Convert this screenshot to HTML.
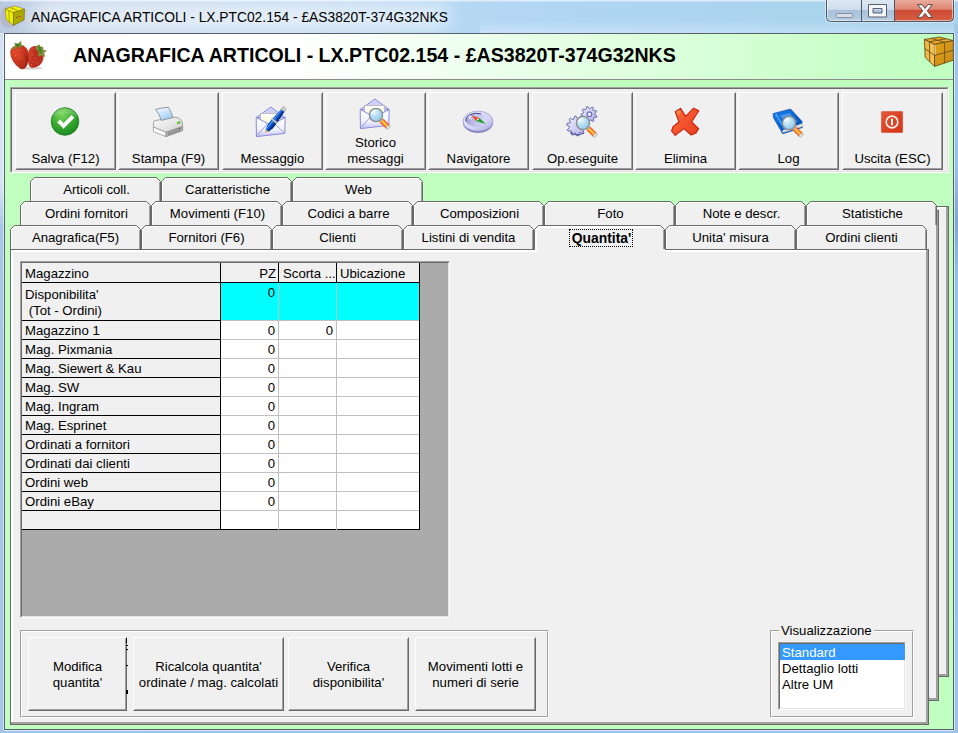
<!DOCTYPE html><html lang="it"><head><meta charset="utf-8"><title>ANAGRAFICA ARTICOLI</title><style>
html,body{margin:0;padding:0}
body{width:958px;height:733px;overflow:hidden;position:relative;font-family:"Liberation Sans",Arial,sans-serif;font-size:13.2px;color:#000;background:#b9d1ea}
.abs{position:absolute}
#frame{position:absolute;left:0;top:0;width:958px;height:733px;background:linear-gradient(90deg,#b9c8de 0,#c9d9ec 6%,#c6dcf2 30%,#b4d7f4 50%,#aed5f2 65%,#aad3ee 85%,#a6d0ec 100%)}
#title{position:absolute;left:31px;top:9px;font-size:13.8px;line-height:18px;color:#000;white-space:nowrap;letter-spacing:0}
#client{position:absolute;left:4px;top:33px;width:948px;height:695px;border:1px solid #56606c;background:#C0FFC0}
#hdr{position:absolute;left:5px;top:34px;width:948px;height:45px;background:linear-gradient(90deg,#fff 0,#fff 30%,#C0FFC0 100%);border-bottom:1px solid #8a8a8a}
#hdrtxt{position:absolute;left:73px;top:43px;font-size:19.6px;font-weight:bold;line-height:24px;white-space:nowrap}
.sunk{position:absolute;box-sizing:border-box;background:#F0F0F0;border:1px solid;border-color:#A0A0A0 #fff #fff #A0A0A0}
.sunk:before{content:"";position:absolute;left:0;top:0;right:0;bottom:0;border:1px solid;border-color:#696969 #E3E3E3 #E3E3E3 #696969}
.btn{position:absolute;box-sizing:border-box;background:#F0F0F0;border:1px solid;border-color:#fff #696969 #696969 #fff;text-align:center;line-height:16px}
.btn:before{content:"";position:absolute;left:0;top:0;right:0;bottom:0;border:1px solid;border-color:#F0F0F0 #A0A0A0 #A0A0A0 #F0F0F0}
.btn span{position:absolute;left:0;right:0;display:block}
.tabl{position:absolute;width:131px;height:24px;line-height:24px;text-align:center;white-space:nowrap}
.cell{position:absolute;box-sizing:border-box;white-space:nowrap;overflow:hidden;line-height:17px}
</style></head><body>
<div id="frame"></div>
<div class="abs" style="left:0;top:0;width:958px;height:33px;overflow:hidden"><div class="abs" style="left:30px;top:6px;width:420px;height:22px;border-radius:11px;background:rgba(255,255,255,.62);filter:blur(9px)"></div><div class="abs" style="left:0;top:0;width:958px;height:2px;background:linear-gradient(180deg,rgba(255,255,255,.7),rgba(255,255,255,.15))"></div><div class="abs" style="left:480px;top:20px;width:478px;height:13px;background:linear-gradient(180deg,rgba(255,255,255,0),rgba(255,255,255,.28))"></div></div>
<div class="abs" style="left:0;top:33px;width:4px;height:700px;background:linear-gradient(180deg,#d3e3f4 0,#d3e3f4 22%,#a7c6e8 28%,#a4c4e8 100%)"></div><div class="abs" style="left:3px;top:33px;width:1px;height:697px;background:rgba(255,255,255,.55)"></div>
<div class="abs" style="left:954px;top:23px;width:4px;height:710px;background:linear-gradient(180deg,#a4cae8 0,#9cc0e4 20%,#84a6cc 28%,#9cc0e4 36%,#9cc2e6 100%)"></div><div class="abs" style="left:954px;top:33px;width:1px;height:697px;background:rgba(255,255,255,.6)"></div>
<div class="abs" style="left:0;top:730px;width:958px;height:3px;background:linear-gradient(90deg,#a4c4e8,#9cc2e6)"></div><div class="abs" style="left:4px;top:730px;width:950px;height:1px;background:rgba(255,255,255,.6)"></div>
<svg class="abs" style="left:0px;top:0px;overflow:visible" width="32" height="32" viewBox="0 0 32 32" ><ellipse cx="9" cy="17" rx="9" ry="11" fill="#a07070" opacity=".18"/><path d="M5.2,9 L15,6 L24.6,9.2 L13.4,12.6 Z" fill="#f4f418" stroke="#7a6a10" stroke-width=".5"/><path d="M5.2,9 L13.4,12.6 L13.4,25.4 L6.2,19.6 Z" fill="#f2f200" stroke="#7a6a10" stroke-width=".5"/><path d="M13.4,12.6 L24.6,9.2 L24.2,20 L13.4,25.4 Z" fill="#a8a800" stroke="#6a5a10" stroke-width=".5"/><path d="M8.8,10.6 L9.4,22.2 M10.2,7.6 L19,11" stroke="#b4b000" stroke-width="1.2" fill="none"/><circle cx="16.6" cy="17.4" r=".6" fill="#d01010"/><circle cx="18.6" cy="16.6" r=".5" fill="#d01010"/><circle cx="20.6" cy="16.4" r=".5" fill="#d01010"/></svg>
<div id="title">ANAGRAFICA ARTICOLI - LX.PTC02.154 - £AS3820T-374G32NKS</div>
<svg class="abs" style="left:820px;top:0px;overflow:visible" width="138" height="28" viewBox="0 0 138 28" ><defs><linearGradient id="wcA" x1="0" y1="0" x2="0" y2="1"><stop offset="0" stop-color="#dfe9f4"/><stop offset=".48" stop-color="#cddcec"/><stop offset=".5" stop-color="#a9c2da"/><stop offset="1" stop-color="#b6cde2"/></linearGradient><linearGradient id="wcB" x1="0" y1="0" x2="0" y2="1"><stop offset="0" stop-color="#eab0a2"/><stop offset=".46" stop-color="#de8470"/><stop offset=".5" stop-color="#cf4a34"/><stop offset="1" stop-color="#d66044"/></linearGradient></defs><path d="M6.5,-1 V17.5 Q6.5,21.5 10.5,21.5 H74.5 V-1 Z" fill="url(#wcA)"/><path d="M74.5,-1 V21.5 H129.5 Q133.5,21.5 133.5,17.5 V-1 Z" fill="url(#wcB)"/><path d="M7.5,0 V17.5 Q7.5,20.5 10.5,20.5 H73.5 M75.5,20.5 H129.5 Q132.5,20.5 132.5,17.5 V0" fill="none" stroke="#fff" stroke-opacity=".5"/><path d="M6.5,-1 V17.5 Q6.5,21.5 10.5,21.5 H129.5 Q133.5,21.5 133.5,17.5 V-1 M41.5,0 V21 M74.5,0 V21" fill="none" stroke="#4c5966" stroke-width="1"/><path d="M5.5,-1 V18 Q5.5,22.5 10.5,22.5 H129.5 Q134.5,22.5 134.5,18 V-1" fill="none" stroke="#fff" stroke-opacity=".45"/><rect x="16.5" y="13.5" width="16" height="4" rx=".8" fill="#d9dfe8" stroke="#7f8fa2" stroke-width="1"/><path d="M48.5,4.5 H66.5 V17 H48.5 Z M53,8.5 V13 H62 V8.5 Z" fill="#f4f6f9" fill-rule="evenodd" stroke="#56606e" stroke-width="1" stroke-linejoin="round"/><path d="M97.6,4.6 H102.2 L105,8.4 L107.8,4.6 H112.4 L107.3,10.9 L112.6,17.4 H108 L105,13.4 L102,17.4 H97.4 L102.7,10.9 Z" fill="#f6f6f6" stroke="#5a4640" stroke-width="1" stroke-linejoin="round"/></svg>
<div id="client"></div>
<div id="hdr"></div>
<svg class="abs" style="left:5px;top:34px;overflow:visible" width="60" height="44" viewBox="0 0 60 44" ><defs><radialGradient id="sb1" cx=".3" cy=".3" r=".8"><stop offset="0" stop-color="#e2482a"/><stop offset=".6" stop-color="#c4341f"/><stop offset="1" stop-color="#a82a1a"/></radialGradient></defs><ellipse cx="26" cy="34.2" rx="12" ry="1.4" fill="#b0b0b0" opacity=".55"/><path d="M23.5,17 C25,12.5 31,10.5 35,13.5 C39,16 39.5,23 37.5,27.5 C35.5,32 30,34.5 26,33.5 C22.5,32.5 22.5,23 23.5,17 Z" fill="#b93220"/><path d="M24,18 C25,14.5 28,13 30,14 C27.5,18 26,23 25.5,30 C23.8,27 23.2,22 24,18 Z" fill="#cf3e24"/><path d="M31,12 L34.5,10.5 L36,13 L38,12.5 L38.5,16 L42,16.5 L39,19 L40.5,23 L37,21.5 L33,22 L33.5,17.5 L30.5,15 Z" fill="#8a8a3c"/><path d="M33,11.5 L36,13.5 L37,18 L35,20 L33.5,16 Z" fill="#3e8a2a"/><path d="M5.3,19 C5,14 9,11 13,11.5 C17,10.5 21.5,12.5 22.8,16.5 C24,21 24,27 21.5,32 C20.5,35 17,36.2 15,34.5 C10,31 5.8,25.5 5.3,19 Z" fill="url(#sb1)"/><path d="M19.5,20 L23,24 L22.5,31 L20.5,33 L21,26 Z" fill="#8f2416" opacity=".8"/><path d="M6.5,14.5 L10,11.5 L9.5,8.5 L12.5,10 L16.2,6.8 L16.5,11 L19.5,11.5 L15,13.5 L12,13 L9,15.5 Z" fill="#7c8a34"/><path d="M10.5,10 L13,9.5 L14.5,12 L12,12.5 Z" fill="#2f6f2a"/><g fill="#e8684a"><rect x="8" y="17" width="1" height="1.2"/><rect x="11" y="16.2" width="1" height="1.2"/><rect x="14" y="15.4" width="1" height="1.2"/><rect x="10" y="21" width="1" height="1.2"/><rect x="13.5" y="20" width="1" height="1.2"/><rect x="12.5" y="24.5" width="1" height="1.2"/><rect x="16" y="23" width="1" height="1.2"/><rect x="27" y="20" width="1" height="1.2"/><rect x="29.5" y="24" width="1" height="1.2"/><rect x="27.5" y="27" width="1" height="1.2"/><rect x="31" y="28.5" width="1" height="1.2"/><rect x="26" y="30" width="1" height="1.2"/></g></svg>
<div id="hdrtxt">ANAGRAFICA ARTICOLI - LX.PTC02.154 - £AS3820T-374G32NKS</div>
<div class="abs" style="left:920px;top:34px;width:33px;height:40px;overflow:hidden"><svg class="abs" style="left:0px;top:0px;overflow:visible" width="40" height="40" viewBox="0 0 40 40" ><defs><linearGradient id="bxL" x1="0" y1="0" x2="1" y2="0"><stop offset="0" stop-color="#eeb03a"/><stop offset="1" stop-color="#f8c860"/></linearGradient><linearGradient id="bxR" x1="0" y1="0" x2="1" y2="1"><stop offset="0" stop-color="#e2a21e"/><stop offset="1" stop-color="#c88a10"/></linearGradient></defs><path d="M4.4,5.4 L19.6,3 L33.4,6.6 L14.4,10.4 Z" fill="#eaa82c" stroke="#5e4410" stroke-width=".8" stroke-linejoin="round"/><path d="M4.4,5.4 L14.4,10.4 L14.6,32.4 L5.2,23.6 Z" fill="url(#bxL)" stroke="#5e4410" stroke-width=".8" stroke-linejoin="round"/><path d="M14.4,10.4 L33.4,6.6 L33.4,26.2 L14.6,32.4 Z" fill="url(#bxR)" stroke="#5e4410" stroke-width=".8" stroke-linejoin="round"/><path d="M9.4,7.9 L9.8,28 M4.8,14.4 L14.5,21.4 L33.4,16.2 M24.6,8.4 L24.6,29.2 M9.4,7.9 L26,4.7 M11.5,4.3 L24.6,8.4" fill="none" stroke="#6a5018" stroke-width=".9"/><path d="M14.9,11 L15,20.6" stroke="#fff0c0" stroke-width="1" opacity=".9"/></svg></div>
<div class="sunk" style="left:10px;top:87px;width:939px;height:86px"></div>
<div class="btn" style="left:15px;top:92px;width:101px;height:78px"><span style="top:58px">Salva (F12)</span></div>
<svg class="abs" style="left:45px;top:102px;overflow:visible" width="40" height="40" viewBox="0 0 40 40" ><defs><radialGradient id="ck" cx=".4" cy=".25" r=".85"><stop offset="0" stop-color="#7fd65e"/><stop offset=".45" stop-color="#3cae32"/><stop offset="1" stop-color="#14801c"/></radialGradient></defs><circle cx="20" cy="19.5" r="13.8" fill="url(#ck)" stroke="#1c7a20" stroke-width=".8"/><path d="M8,14 A13,13 0 0 1 32,14 A20,14 0 0 0 8,14 Z" fill="#fff" opacity=".18"/><path d="M12.4,20.4 L15,17.8 L18.6,21.2 L26.6,13.2 L29.2,15.8 L18.6,26.4 Z" fill="#fff" stroke="#e8e8e8" stroke-width=".6" stroke-linejoin="round"/><path d="M13,21 L18.6,26.4 L29,16" fill="none" stroke="#c8c8c8" stroke-width="1" opacity=".7"/></svg>
<div class="btn" style="left:118px;top:92px;width:101px;height:78px"><span style="top:58px">Stampa (F9)</span></div>
<svg class="abs" style="left:148px;top:102px;overflow:visible" width="40" height="40" viewBox="0 0 40 40" ><defs><linearGradient id="prT" x1="0" y1="0" x2="1" y2="1"><stop offset="0" stop-color="#f8f8f8"/><stop offset=".6" stop-color="#e4e4e4"/><stop offset="1" stop-color="#bcbcbc"/></linearGradient><linearGradient id="prP" x1="0" y1="0" x2=".6" y2="1"><stop offset="0" stop-color="#ffffff"/><stop offset="1" stop-color="#9cccf8"/></linearGradient></defs><path d="M5.4,20.4 Q5.4,19 7,18.6 L26,15.2 Q29,15 31.5,16.6 Q34.6,19 34.6,22 L34.6,24.6 L18,30.4 L5.4,25 Z" fill="url(#prT)" stroke="#9a9a9a" stroke-width=".9" stroke-linejoin="round"/><path d="M5.4,25 L18,30.4 L18,34.6 L5.4,29.6 Z" fill="#ffffff" stroke="#a2a2a2" stroke-width=".9" stroke-linejoin="round"/><path d="M18,30.4 L34.6,24.6 L34.6,28.6 L18,34.6 Z" fill="#b2b2b2" stroke="#8e8e8e" stroke-width=".9" stroke-linejoin="round"/><path d="M20,31.2 L33,26.6 M20,32.8 L33,28.2" stroke="#7e7e7e" stroke-width=".8"/><path d="M7.6,7.4 Q14,5.6 20.4,5.2 Q23.6,10 24.8,15.6 L13.2,18.4 Q11.6,12 7.6,7.4 Z" fill="url(#prP)" stroke="#8e8e8e" stroke-width=".9" stroke-linejoin="round"/><ellipse cx="30.6" cy="20.6" rx="2" ry="1.2" transform="rotate(-25 30.6 20.6)" fill="#58c428"/><circle cx="31.4" cy="26.4" r=".7" fill="#3a5a7a"/></svg>
<div class="btn" style="left:222px;top:92px;width:101px;height:78px"><span style="top:58px">Messaggio</span></div>
<svg class="abs" style="left:251px;top:102px;overflow:visible" width="40" height="40" viewBox="0 0 40 40" ><defs>
<radialGradient id="gLens" cx=".35" cy=".3" r=".8"><stop offset="0" stop-color="#eaf7fd"/><stop offset=".45" stop-color="#b4ddf2"/><stop offset="1" stop-color="#8cc4e6"/></radialGradient>
<linearGradient id="gHandle" x1="0" y1="0" x2="1" y2="0"><stop offset="0" stop-color="#f4501c"/><stop offset=".3" stop-color="#ff8a30"/><stop offset=".5" stop-color="#ffd84a"/><stop offset=".75" stop-color="#ff8a30"/><stop offset="1" stop-color="#f04818"/></linearGradient>
<linearGradient id="gEnv" x1="0" y1="0" x2="0" y2="1"><stop offset="0" stop-color="#ffffff"/><stop offset=".6" stop-color="#f2f2ff"/><stop offset="1" stop-color="#c4c4f4"/></linearGradient>
<linearGradient id="gLetter" x1="0" y1="0" x2="0" y2="1"><stop offset="0" stop-color="#ffffff"/><stop offset="1" stop-color="#fdf6c8"/></linearGradient>
</defs><path d="M5.2,15.5 L19.8,5 L34.2,15.5 Z" fill="#cfcffa" stroke="#8e8ee0" stroke-width="1"/><rect x="9.5" y="11.5" width="19.8" height="12" fill="url(#gLetter)" stroke="#b4b4b4" stroke-width=".8"/><path d="M5.2,15.6 L19.6,23 L34.2,15.6 L33.8,31.4 L5.4,34.6 Z" fill="url(#gEnv)" stroke="#8a8adc" stroke-width="1" stroke-linejoin="round"/><path d="M5.6,34.2 L16.5,21.6 M33.6,31.2 L23.2,21.4" fill="none" stroke="#9a9ae0" stroke-width=".9"/><g transform="translate(14.2,30.8) rotate(-52)"><path d="M0,0 L3,-1.6 L3,1.6 Z" fill="#d8b040"/><path d="M3,-1.8 L8,-3.1 L14,-3.1 L14,3.1 L8,3.1 L3,1.8 Z" fill="#0e5ed0"/><path d="M3,.5 L14,.9 L14,3.1 L8,3.1 L3,1.8 Z" fill="#082e86"/><rect x="14" y="-3.2" width="2.2" height="6.4" fill="#c8c8c8" stroke="#777" stroke-width=".4"/><path d="M16.2,-3 L28.4,-2.1 L28.4,2.1 L16.2,3 Z" fill="#0e5ed0"/><path d="M16.2,.9 L28.4,.6 L28.4,2.1 L16.2,3 Z" fill="#082e86"/><path d="M4,-1.3 L27.6,-1.5" stroke="#5aa0f4" stroke-width=".9"/><rect x="28.4" y="-2.1" width="3.6" height="4.2" rx=".9" fill="#d0d0d0" stroke="#777" stroke-width=".4"/></g></svg>
<div class="btn" style="left:325px;top:92px;width:101px;height:78px"><span style="top:42px">Storico</span><span style="top:58px">messaggi</span></div>
<svg class="abs" style="left:355px;top:94px;overflow:visible" width="40" height="40" viewBox="0 0 40 40" ><path d="M5.2,15.5 L19.8,5 L34.2,15.5 Z" fill="#cfcffa" stroke="#8e8ee0" stroke-width="1"/><rect x="9.5" y="11.5" width="19.8" height="12" fill="url(#gLetter)" stroke="#b4b4b4" stroke-width=".8"/><path d="M5.2,15.6 L19.6,23 L34.2,15.6 L33.8,31.4 L5.4,34.6 Z" fill="url(#gEnv)" stroke="#8a8adc" stroke-width="1" stroke-linejoin="round"/><path d="M5.6,34.2 L16.5,21.6 M33.6,31.2 L23.2,21.4" fill="none" stroke="#9a9ae0" stroke-width=".9"/><g><g transform="translate(26.3,26.3) rotate(-45)"><rect x="-2.6" y="0" width="5.2" height="9" fill="url(#gHandle)"/><rect x="-2.4" y="8.6" width="4.8" height="2.2" rx="1" fill="#e8e8e8" stroke="#909090" stroke-width=".6"/><rect x="-1.2" y="-2.2" width="2.4" height="2.6" fill="#d8d8d8" stroke="#8a8a8a" stroke-width=".5"/></g><circle cx="21" cy="21" r="6.6" fill="url(#gLens)" stroke="#8a8a8a" stroke-width="1.3"/><path d="M16.8,19.5 A4.6,4.6 0 0 1 20,16.4" fill="none" stroke="#fff" stroke-width="1.2" stroke-linecap="round" opacity=".9"/></g></svg>
<div class="btn" style="left:428px;top:92px;width:101px;height:78px"><span style="top:58px">Navigatore</span></div>
<svg class="abs" style="left:457px;top:102px;overflow:visible" width="40" height="40" viewBox="0 0 40 40" ><defs><linearGradient id="cpO" x1="0" y1="0" x2="1" y2="1"><stop offset="0" stop-color="#ececfc"/><stop offset=".6" stop-color="#d2d2f6"/><stop offset="1" stop-color="#ababdf"/></linearGradient><linearGradient id="cpI" x1="0" y1="0" x2="1" y2="0"><stop offset="0" stop-color="#a0a0d4"/><stop offset=".35" stop-color="#bcbce8"/><stop offset="1" stop-color="#d8d8f8"/></linearGradient></defs><ellipse cx="21" cy="20.6" rx="15" ry="10.4" fill="#8484c0"/><ellipse cx="21" cy="19.2" rx="15" ry="10" fill="url(#cpO)" stroke="#8c8cc8" stroke-width=".6"/><ellipse cx="19.6" cy="18" rx="10.8" ry="6.8" fill="url(#cpI)"/><path d="M9.2,19.6 A10.8,6.8 0 0 1 24,11.8" fill="none" stroke="#3c4490" stroke-width="1"/><path d="M11,15 Q12,13 14,13.4 L14.6,17.6 Q12,18 11,15 Z" fill="#e8e8f8" opacity=".8"/><path d="M14.6,13.6 L22.4,16 L19,19 Z" fill="#f04820"/><path d="M19,19 L22.4,16 L28.8,22 Z" fill="#18a028"/><circle cx="20.8" cy="17.4" r=".9" fill="#f0f0f0"/></svg>
<div class="btn" style="left:532px;top:92px;width:101px;height:78px"><span style="top:58px">Op.eseguite</span></div>
<svg class="abs" style="left:562px;top:102px;overflow:visible" width="40" height="40" viewBox="0 0 40 40" ><defs><linearGradient id="gr" x1="0" y1="0" x2="1" y2="1"><stop offset="0" stop-color="#f0f0fc"/><stop offset=".6" stop-color="#cacaf0"/><stop offset="1" stop-color="#a6a6dc"/></linearGradient></defs><path d="M34.84,13.99 L34.45,15.33 L31.95,15.43 L31.35,16.24 L31.98,18.66 L30.82,19.43 L28.84,17.90 L27.86,18.14 L26.80,20.40 L25.41,20.24 L24.88,17.80 L23.97,17.35 L21.70,18.40 L20.74,17.38 L21.90,15.17 L21.50,14.24 L19.09,13.59 L19.00,12.20 L21.32,11.25 L21.60,10.28 L20.18,8.22 L21.00,7.10 L23.39,7.86 L24.23,7.30 L24.46,4.82 L25.81,4.49 L27.15,6.60 L28.15,6.72 L29.93,4.95 L31.18,5.58 L30.84,8.05 L31.54,8.79 L34.03,8.58 L34.58,9.86 L32.74,11.54 L32.80,12.55 Z" fill="url(#gr)" stroke="#5e5eb0" stroke-width=".9" stroke-linejoin="round"/><circle cx="27.4" cy="12.2" r="2.4" fill="#ececfa" stroke="#6c6cb8" stroke-width="1.2"/><path d="M24.55,25.00 L24.27,26.54 L21.37,26.98 L20.83,28.00 L22.06,30.66 L20.93,31.74 L18.33,30.39 L17.28,30.90 L16.73,33.77 L15.17,33.98 L13.86,31.36 L12.72,31.16 L10.58,33.15 L9.19,32.41 L9.67,29.52 L8.87,28.68 L5.96,29.04 L5.28,27.63 L7.37,25.57 L7.21,24.42 L4.65,23.00 L4.93,21.46 L7.83,21.02 L8.37,20.00 L7.14,17.34 L8.27,16.26 L10.87,17.61 L11.92,17.10 L12.47,14.23 L14.03,14.02 L15.34,16.64 L16.48,16.84 L18.62,14.85 L20.01,15.59 L19.53,18.48 L20.33,19.32 L23.24,18.96 L23.92,20.37 L21.83,22.43 L21.99,23.58 Z" fill="url(#gr)" stroke="#5a5aac" stroke-width=".9" stroke-linejoin="round"/><path d="M8,30 Q14,35 22,31" fill="none" stroke="#3c3c90" stroke-width="1.2" opacity=".7"/><g><g transform="translate(26.3,26.3) rotate(-45)"><rect x="-2.6" y="0" width="5.2" height="9" fill="url(#gHandle)"/><rect x="-2.4" y="8.6" width="4.8" height="2.2" rx="1" fill="#e8e8e8" stroke="#909090" stroke-width=".6"/><rect x="-1.2" y="-2.2" width="2.4" height="2.6" fill="#d8d8d8" stroke="#8a8a8a" stroke-width=".5"/></g><circle cx="21" cy="21" r="6.6" fill="url(#gLens)" stroke="#8a8a8a" stroke-width="1.3"/><path d="M16.8,19.5 A4.6,4.6 0 0 1 20,16.4" fill="none" stroke="#fff" stroke-width="1.2" stroke-linecap="round" opacity=".9"/></g></svg>
<div class="btn" style="left:635px;top:92px;width:101px;height:78px"><span style="top:58px">Elimina</span></div>
<svg class="abs" style="left:665px;top:102px;overflow:visible" width="40" height="40" viewBox="0 0 40 40" ><defs><linearGradient id="rx" x1="0" y1="0" x2="1" y2="1"><stop offset="0" stop-color="#f87048"/><stop offset=".5" stop-color="#f4542c"/><stop offset="1" stop-color="#e43c1c"/></linearGradient></defs><path d="M10.2,9.6 L15.6,6.4 L20.6,14.4 L28.6,6.2 L33.8,8.8 L26.6,20 L33.6,26.6 L31,31 L26,33 L19,26.6 L10.2,33.4 L6.6,29 L8,24.6 L14,20 Z" fill="url(#rx)" stroke="#c8200c" stroke-width="1.1" stroke-linejoin="round"/><path d="M12,10.4 L14.6,9 M12.6,12 L15,10.6" stroke="#ffc060" stroke-width=".8"/></svg>
<div class="btn" style="left:738px;top:92px;width:101px;height:78px"><span style="top:58px">Log</span></div>
<svg class="abs" style="left:768px;top:102px;overflow:visible" width="40" height="40" viewBox="0 0 40 40" ><defs><linearGradient id="bk" x1="0" y1="0" x2="1" y2="1"><stop offset="0" stop-color="#1880ec"/><stop offset=".5" stop-color="#0a64d4"/><stop offset="1" stop-color="#0848b0"/></linearGradient></defs><path d="M14.6,30.6 L34.6,24.4 L34.8,25.8 L15.2,32 Z" fill="#0a50b8"/><path d="M14.4,27.8 L33.8,21 L34.6,24.6 L14.6,30.8 Z" fill="#e0e0e4" stroke="#9a9aa0" stroke-width=".5"/><path d="M5,11.6 L22.6,7 L34.2,19.6 L33.8,21.2 L14.4,28 L13.6,30.4 L14.8,31.8 L5.6,16 Z" fill="url(#bk)" stroke="#0a48a8" stroke-width=".6" stroke-linejoin="round"/><path d="M7.6,11.8 L16.8,26.8" stroke="#54a8f8" stroke-width="1.4" fill="none"/><path d="M12,13.4 L21.6,10.8 L29.6,19.6 L19.4,23 Z" fill="#5aa0e8" opacity=".8"/><g><g transform="translate(26.3,26.3) rotate(-45)"><rect x="-2.6" y="0" width="5.2" height="9" fill="url(#gHandle)"/><rect x="-2.4" y="8.6" width="4.8" height="2.2" rx="1" fill="#e8e8e8" stroke="#909090" stroke-width=".6"/><rect x="-1.2" y="-2.2" width="2.4" height="2.6" fill="#d8d8d8" stroke="#8a8a8a" stroke-width=".5"/></g><circle cx="21" cy="21" r="6.6" fill="url(#gLens)" stroke="#8a8a8a" stroke-width="1.3"/><path d="M16.8,19.5 A4.6,4.6 0 0 1 20,16.4" fill="none" stroke="#fff" stroke-width="1.2" stroke-linecap="round" opacity=".9"/></g></svg>
<div class="btn" style="left:842px;top:92px;width:101px;height:78px"><span style="top:58px">Uscita (ESC)</span></div>
<svg class="abs" style="left:872px;top:102px;overflow:visible" width="40" height="40" viewBox="0 0 40 40" ><defs><linearGradient id="pw" x1="0" y1="0" x2="1" y2="1"><stop offset="0" stop-color="#e4583a"/><stop offset=".5" stop-color="#dc4426"/><stop offset="1" stop-color="#d43214"/></linearGradient></defs><rect x="8.4" y="8.4" width="23.2" height="23.2" rx="1.5" fill="#e8e8e8"/><rect x="9.2" y="9.2" width="21.6" height="21.6" rx="1" fill="url(#pw)"/><circle cx="20" cy="20" r="5.8" fill="none" stroke="#fbeee8" stroke-width="1.7"/><rect x="19.1" y="16.6" width="1.9" height="6.8" rx=".6" fill="#fff"/></svg>
<svg class="abs" style="left:0;top:0" width="958" height="733" viewBox="0 0 958 733" shape-rendering="crispEdges"><rect x="30" y="201" width="394" height="6" fill="#F0F0F0"/><rect x="900" y="206" width="49" height="471" fill="#F0F0F0"/><path d="M900.5,677 V206.5 H949" fill="none" stroke="#696969"/><path d="M902,676 V208 H948" fill="none" stroke="#fff" stroke-width="2"/><path d="M947,207 V675 H901" fill="none" stroke="#A0A0A0" stroke-width="2"/><path d="M948.5,206 V676.5 H900" fill="none" stroke="#696969"/><path d="M30.5,201 V181.5 L34.5,177.5 H156.5 L160.5,181.5 V201 Z" fill="#F0F0F0" stroke="none"/><path d="M31.5,201 V182 L35,178.5 H156" fill="none" stroke="#fff" shape-rendering="auto"/><path d="M159.5,182 V201" fill="none" stroke="#A0A0A0"/><path d="M30.5,201 V181.5 L34.5,177.5 H156.5 L160.5,181.5 V201" fill="none" stroke="#696969" shape-rendering="auto"/><path d="M161.5,201 V181.5 L165.5,177.5 H287.5 L291.5,181.5 V201 Z" fill="#F0F0F0" stroke="none"/><path d="M162.5,201 V182 L166,178.5 H287" fill="none" stroke="#fff" shape-rendering="auto"/><path d="M290.5,182 V201" fill="none" stroke="#A0A0A0"/><path d="M161.5,201 V181.5 L165.5,177.5 H287.5 L291.5,181.5 V201" fill="none" stroke="#696969" shape-rendering="auto"/><path d="M292.5,201 V181.5 L296.5,177.5 H418.5 L422.5,181.5 V201 Z" fill="#F0F0F0" stroke="none"/><path d="M293.5,201 V182 L297,178.5 H418" fill="none" stroke="#fff" shape-rendering="auto"/><path d="M421.5,182 V201" fill="none" stroke="#A0A0A0"/><path d="M292.5,201 V181.5 L296.5,177.5 H418.5 L422.5,181.5 V201" fill="none" stroke="#696969" shape-rendering="auto"/><rect x="20" y="225" width="919" height="6" fill="#F0F0F0"/><rect x="890" y="210" width="49" height="491" fill="#F0F0F0"/><path d="M890.5,701 V210.5 H939" fill="none" stroke="#696969"/><path d="M892,700 V212 H938" fill="none" stroke="#fff" stroke-width="2"/><path d="M937,211 V699 H891" fill="none" stroke="#A0A0A0" stroke-width="2"/><path d="M938.5,210 V700.5 H890" fill="none" stroke="#696969"/><path d="M20.5,225 V205.5 L24.5,201.5 H146.5 L150.5,205.5 V225 Z" fill="#F0F0F0" stroke="none"/><path d="M21.5,225 V206 L25,202.5 H146" fill="none" stroke="#fff" shape-rendering="auto"/><path d="M149.5,206 V225" fill="none" stroke="#A0A0A0"/><path d="M20.5,225 V205.5 L24.5,201.5 H146.5 L150.5,205.5 V225" fill="none" stroke="#696969" shape-rendering="auto"/><path d="M151.5,225 V205.5 L155.5,201.5 H277.5 L281.5,205.5 V225 Z" fill="#F0F0F0" stroke="none"/><path d="M152.5,225 V206 L156,202.5 H277" fill="none" stroke="#fff" shape-rendering="auto"/><path d="M280.5,206 V225" fill="none" stroke="#A0A0A0"/><path d="M151.5,225 V205.5 L155.5,201.5 H277.5 L281.5,205.5 V225" fill="none" stroke="#696969" shape-rendering="auto"/><path d="M282.5,225 V205.5 L286.5,201.5 H408.5 L412.5,205.5 V225 Z" fill="#F0F0F0" stroke="none"/><path d="M283.5,225 V206 L287,202.5 H408" fill="none" stroke="#fff" shape-rendering="auto"/><path d="M411.5,206 V225" fill="none" stroke="#A0A0A0"/><path d="M282.5,225 V205.5 L286.5,201.5 H408.5 L412.5,205.5 V225" fill="none" stroke="#696969" shape-rendering="auto"/><path d="M413.5,225 V205.5 L417.5,201.5 H539.5 L543.5,205.5 V225 Z" fill="#F0F0F0" stroke="none"/><path d="M414.5,225 V206 L418,202.5 H539" fill="none" stroke="#fff" shape-rendering="auto"/><path d="M542.5,206 V225" fill="none" stroke="#A0A0A0"/><path d="M413.5,225 V205.5 L417.5,201.5 H539.5 L543.5,205.5 V225" fill="none" stroke="#696969" shape-rendering="auto"/><path d="M544.5,225 V205.5 L548.5,201.5 H670.5 L674.5,205.5 V225 Z" fill="#F0F0F0" stroke="none"/><path d="M545.5,225 V206 L549,202.5 H670" fill="none" stroke="#fff" shape-rendering="auto"/><path d="M673.5,206 V225" fill="none" stroke="#A0A0A0"/><path d="M544.5,225 V205.5 L548.5,201.5 H670.5 L674.5,205.5 V225" fill="none" stroke="#696969" shape-rendering="auto"/><path d="M675.5,225 V205.5 L679.5,201.5 H801.5 L805.5,205.5 V225 Z" fill="#F0F0F0" stroke="none"/><path d="M676.5,225 V206 L680,202.5 H801" fill="none" stroke="#fff" shape-rendering="auto"/><path d="M804.5,206 V225" fill="none" stroke="#A0A0A0"/><path d="M675.5,225 V205.5 L679.5,201.5 H801.5 L805.5,205.5 V225" fill="none" stroke="#696969" shape-rendering="auto"/><path d="M806.5,225 V205.5 L810.5,201.5 H932.5 L936.5,205.5 V225 Z" fill="#F0F0F0" stroke="none"/><path d="M807.5,225 V206 L811,202.5 H932" fill="none" stroke="#fff" shape-rendering="auto"/><path d="M935.5,206 V225" fill="none" stroke="#A0A0A0"/><path d="M806.5,225 V205.5 L810.5,201.5 H932.5 L936.5,205.5 V225" fill="none" stroke="#696969" shape-rendering="auto"/><rect x="10" y="249" width="919" height="476" fill="#F0F0F0"/><path d="M10.5,725 V249.5 H929" fill="none" stroke="#696969"/><path d="M12,724 V251 H928" fill="none" stroke="#fff" stroke-width="2"/><path d="M927,250 V723 H11" fill="none" stroke="#A0A0A0" stroke-width="2"/><path d="M928.5,249 V724.5 H10" fill="none" stroke="#696969"/><path d="M10.5,249 V229.5 L14.5,225.5 H136.5 L140.5,229.5 V249 Z" fill="#F0F0F0" stroke="none"/><path d="M11.5,249 V230 L15,226.5 H136" fill="none" stroke="#fff" shape-rendering="auto"/><path d="M139.5,230 V249" fill="none" stroke="#A0A0A0"/><path d="M10.5,249 V229.5 L14.5,225.5 H136.5 L140.5,229.5 V249" fill="none" stroke="#696969" shape-rendering="auto"/><path d="M141.5,249 V229.5 L145.5,225.5 H267.5 L271.5,229.5 V249 Z" fill="#F0F0F0" stroke="none"/><path d="M142.5,249 V230 L146,226.5 H267" fill="none" stroke="#fff" shape-rendering="auto"/><path d="M270.5,230 V249" fill="none" stroke="#A0A0A0"/><path d="M141.5,249 V229.5 L145.5,225.5 H267.5 L271.5,229.5 V249" fill="none" stroke="#696969" shape-rendering="auto"/><path d="M272.5,249 V229.5 L276.5,225.5 H398.5 L402.5,229.5 V249 Z" fill="#F0F0F0" stroke="none"/><path d="M273.5,249 V230 L277,226.5 H398" fill="none" stroke="#fff" shape-rendering="auto"/><path d="M401.5,230 V249" fill="none" stroke="#A0A0A0"/><path d="M272.5,249 V229.5 L276.5,225.5 H398.5 L402.5,229.5 V249" fill="none" stroke="#696969" shape-rendering="auto"/><path d="M403.5,249 V229.5 L407.5,225.5 H529.5 L533.5,229.5 V249 Z" fill="#F0F0F0" stroke="none"/><path d="M404.5,249 V230 L408,226.5 H529" fill="none" stroke="#fff" shape-rendering="auto"/><path d="M532.5,230 V249" fill="none" stroke="#A0A0A0"/><path d="M403.5,249 V229.5 L407.5,225.5 H529.5 L533.5,229.5 V249" fill="none" stroke="#696969" shape-rendering="auto"/><path d="M665.5,249 V229.5 L669.5,225.5 H791.5 L795.5,229.5 V249 Z" fill="#F0F0F0" stroke="none"/><path d="M666.5,249 V230 L670,226.5 H791" fill="none" stroke="#fff" shape-rendering="auto"/><path d="M794.5,230 V249" fill="none" stroke="#A0A0A0"/><path d="M665.5,249 V229.5 L669.5,225.5 H791.5 L795.5,229.5 V249" fill="none" stroke="#696969" shape-rendering="auto"/><path d="M796.5,249 V229.5 L800.5,225.5 H922.5 L926.5,229.5 V249 Z" fill="#F0F0F0" stroke="none"/><path d="M797.5,249 V230 L801,226.5 H922" fill="none" stroke="#fff" shape-rendering="auto"/><path d="M925.5,230 V249" fill="none" stroke="#A0A0A0"/><path d="M796.5,249 V229.5 L800.5,225.5 H922.5 L926.5,229.5 V249" fill="none" stroke="#696969" shape-rendering="auto"/><path d="M534.5,252 V229.5 L538.5,225.5 H660.5 L664.5,229.5 V249 H665 V252 Z" fill="#F0F0F0" stroke="none"/><path d="M536,252 V230.2 L539.2,227 H660" fill="none" stroke="#fff" stroke-width="2" shape-rendering="auto"/><path d="M663.5,230 V249" fill="none" stroke="#A0A0A0"/><path d="M534.5,249 V229.5 L538.5,225.5 H660.5 L664.5,229.5 V249" fill="none" stroke="#696969" shape-rendering="auto"/></svg>
<div class="tabl" style="left:31px;top:178px">Articoli coll.</div>
<div class="tabl" style="left:162px;top:178px">Caratteristiche</div>
<div class="tabl" style="left:293px;top:178px">Web</div>
<div class="tabl" style="left:21px;top:202px">Ordini fornitori</div>
<div class="tabl" style="left:152px;top:202px">Movimenti (F10)</div>
<div class="tabl" style="left:283px;top:202px">Codici a barre</div>
<div class="tabl" style="left:414px;top:202px">Composizioni</div>
<div class="tabl" style="left:545px;top:202px">Foto</div>
<div class="tabl" style="left:676px;top:202px">Note e descr.</div>
<div class="tabl" style="left:807px;top:202px">Statistiche</div>
<div class="tabl" style="left:10px;top:226px">Anagrafica(F5)</div>
<div class="tabl" style="left:141px;top:226px">Fornitori (F6)</div>
<div class="tabl" style="left:272px;top:226px">Clienti</div>
<div class="tabl" style="left:403px;top:226px">Listini di vendita</div>
<div class="abs" style="left:569px;top:229px;width:64px;height:18px;box-sizing:border-box;border:1px dotted #000"></div>
<div class="tabl" style="left:536px;top:226px;font-weight:bold;font-size:13.9px">Quantita'</div>
<div class="tabl" style="left:665px;top:226px">Unita' misura</div>
<div class="tabl" style="left:796px;top:226px">Ordini clienti</div>
<div class="abs" style="left:20px;top:261px;width:430px;height:357px;box-sizing:border-box;background:#ABABAB;border:1px solid;border-color:#A0A0A0 #fff #fff #A0A0A0"><div class="abs" style="left:0;top:0;right:0;bottom:0;border:1px solid;border-color:#696969 #E3E3E3 #E3E3E3 #696969"></div></div>
<div class="abs" style="left:221px;top:283px;width:199px;height:247px;background:#fff"></div>
<div class="abs" style="left:221px;top:283px;width:199px;height:37px;background:#00FFFF"></div>
<div class="abs" style="left:22px;top:263px;width:398px;height:20px;background:#F0F0F0"></div>
<div class="abs" style="left:22px;top:263px;width:199px;height:267px;background:#F0F0F0"></div>
<div class="abs" style="left:22px;top:282px;width:199px;height:1px;background:#000"></div><div class="abs" style="left:221px;top:282px;width:199px;height:1px;background:#000"></div><div class="abs" style="left:22px;top:320px;width:199px;height:1px;background:#000"></div><div class="abs" style="left:221px;top:320px;width:199px;height:1px;background:#C0C0C0"></div><div class="abs" style="left:22px;top:339px;width:199px;height:1px;background:#000"></div><div class="abs" style="left:221px;top:339px;width:199px;height:1px;background:#C0C0C0"></div><div class="abs" style="left:22px;top:358px;width:199px;height:1px;background:#000"></div><div class="abs" style="left:221px;top:358px;width:199px;height:1px;background:#C0C0C0"></div><div class="abs" style="left:22px;top:377px;width:199px;height:1px;background:#000"></div><div class="abs" style="left:221px;top:377px;width:199px;height:1px;background:#C0C0C0"></div><div class="abs" style="left:22px;top:396px;width:199px;height:1px;background:#000"></div><div class="abs" style="left:221px;top:396px;width:199px;height:1px;background:#C0C0C0"></div><div class="abs" style="left:22px;top:415px;width:199px;height:1px;background:#000"></div><div class="abs" style="left:221px;top:415px;width:199px;height:1px;background:#C0C0C0"></div><div class="abs" style="left:22px;top:434px;width:199px;height:1px;background:#000"></div><div class="abs" style="left:221px;top:434px;width:199px;height:1px;background:#C0C0C0"></div><div class="abs" style="left:22px;top:453px;width:199px;height:1px;background:#000"></div><div class="abs" style="left:221px;top:453px;width:199px;height:1px;background:#C0C0C0"></div><div class="abs" style="left:22px;top:472px;width:199px;height:1px;background:#000"></div><div class="abs" style="left:221px;top:472px;width:199px;height:1px;background:#C0C0C0"></div><div class="abs" style="left:22px;top:491px;width:199px;height:1px;background:#000"></div><div class="abs" style="left:221px;top:491px;width:199px;height:1px;background:#C0C0C0"></div><div class="abs" style="left:22px;top:510px;width:199px;height:1px;background:#000"></div><div class="abs" style="left:221px;top:510px;width:199px;height:1px;background:#C0C0C0"></div><div class="abs" style="left:22px;top:529px;width:199px;height:1px;background:#000"></div><div class="abs" style="left:221px;top:529px;width:199px;height:1px;background:#000"></div><div class="abs" style="left:220px;top:263px;width:1px;height:267px;background:#000"></div><div class="abs" style="left:278px;top:263px;width:1px;height:19px;background:#000"></div><div class="abs" style="left:278px;top:283px;width:1px;height:247px;background:#C0C0C0"></div><div class="abs" style="left:336px;top:263px;width:1px;height:19px;background:#000"></div><div class="abs" style="left:336px;top:283px;width:1px;height:247px;background:#C0C0C0"></div><div class="abs" style="left:419px;top:263px;width:1px;height:267px;background:#000"></div>
<div class="cell" style="left:25px;top:265px;width:194px">Magazzino</div>
<div class="cell" style="left:25px;top:287px;width:194px;line-height:16px;white-space:pre">Disponibilita'<br> (Tot - Ordini)</div>
<div class="cell" style="left:25px;top:322px;width:194px">Magazzino 1</div>
<div class="cell" style="left:25px;top:341px;width:194px">Mag. Pixmania</div>
<div class="cell" style="left:25px;top:360px;width:194px">Mag. Siewert &amp; Kau</div>
<div class="cell" style="left:25px;top:379px;width:194px">Mag. SW</div>
<div class="cell" style="left:25px;top:398px;width:194px">Mag. Ingram</div>
<div class="cell" style="left:25px;top:417px;width:194px">Mag. Esprinet</div>
<div class="cell" style="left:25px;top:436px;width:194px">Ordinati a fornitori</div>
<div class="cell" style="left:25px;top:455px;width:194px">Ordinati dai clienti</div>
<div class="cell" style="left:25px;top:474px;width:194px">Ordini web</div>
<div class="cell" style="left:25px;top:493px;width:194px">Ordini eBay</div>
<div class="cell" style="left:221px;top:265px;width:55px;text-align:right">PZ</div>
<div class="cell" style="left:283px;top:265px;width:53px">Scorta ...</div>
<div class="cell" style="left:340px;top:265px;width:79px">Ubicazione</div>
<div class="cell" style="left:221px;top:284px;width:54px;text-align:right">0</div>
<div class="cell" style="left:221px;top:322px;width:54px;text-align:right">0</div>
<div class="cell" style="left:221px;top:341px;width:54px;text-align:right">0</div>
<div class="cell" style="left:221px;top:360px;width:54px;text-align:right">0</div>
<div class="cell" style="left:221px;top:379px;width:54px;text-align:right">0</div>
<div class="cell" style="left:221px;top:398px;width:54px;text-align:right">0</div>
<div class="cell" style="left:221px;top:417px;width:54px;text-align:right">0</div>
<div class="cell" style="left:221px;top:436px;width:54px;text-align:right">0</div>
<div class="cell" style="left:221px;top:455px;width:54px;text-align:right">0</div>
<div class="cell" style="left:221px;top:474px;width:54px;text-align:right">0</div>
<div class="cell" style="left:221px;top:493px;width:54px;text-align:right">0</div>
<div class="cell" style="left:279px;top:322px;width:54px;text-align:right">0</div>
<div class="abs" style="left:20px;top:630px;width:529px;height:88px;box-sizing:border-box;border:1px solid;border-color:#A0A0A0 #fff #fff #A0A0A0"><div class="abs" style="left:0;top:0;right:0;bottom:0;border:1px solid;border-color:#fff #A0A0A0 #A0A0A0 #fff"></div></div>
<div class="btn" style="left:28px;top:637px;width:99px;height:74px"><span style="top:21px">Modifica</span><span style="top:37px">quantita'</span></div>
<div class="btn" style="left:133px;top:637px;width:151px;height:74px"><span style="top:21px">Ricalcola quantita'</span><span style="top:37px">ordinate / mag. calcolati</span></div>
<div class="btn" style="left:288px;top:637px;width:121px;height:74px"><span style="top:21px">Verifica</span><span style="top:37px">disponibilita'</span></div>
<div class="btn" style="left:415px;top:637px;width:121px;height:74px"><span style="top:21px">Movimenti lotti e</span><span style="top:37px">numeri di serie</span></div>
<div class="abs" style="left:126px;top:638px;width:1px;height:5px;background:#000"></div><div class="abs" style="left:126px;top:645px;width:2px;height:1px;background:#000"></div><div class="abs" style="left:126px;top:649px;width:2px;height:1px;background:#000"></div><div class="abs" style="left:126px;top:665px;width:2px;height:1px;background:#000"></div><div class="abs" style="left:126px;top:690px;width:2px;height:4px;background:#000"></div>
<div class="abs" style="left:770px;top:630px;width:144px;height:88px;box-sizing:border-box;border:1px solid;border-color:#A0A0A0 #fff #fff #A0A0A0"><div class="abs" style="left:0;top:0;right:0;bottom:0;border:1px solid;border-color:#fff #A0A0A0 #A0A0A0 #fff"></div></div>
<div class="abs" style="left:779px;top:623px;padding:0 2px;background:#F0F0F0;line-height:16px">Visualizzazione</div>
<div class="abs" style="left:778px;top:642px;width:128px;height:68px;box-sizing:border-box;background:#fff;border:1px solid;border-color:#A0A0A0 #fff #fff #A0A0A0"><div class="abs" style="left:0;top:0;right:0;bottom:0;border:1px solid;border-color:#696969 #E3E3E3 #E3E3E3 #696969"></div></div>
<div class="abs" style="left:780px;top:644px;width:125px;height:16px;background:#3399FF;color:#fff;line-height:18px;padding-left:2px;box-sizing:border-box">Standard</div>
<div class="abs" style="left:782px;top:661px;line-height:16px">Dettaglio lotti</div>
<div class="abs" style="left:782px;top:677px;line-height:16px">Altre UM</div>
</body></html>
